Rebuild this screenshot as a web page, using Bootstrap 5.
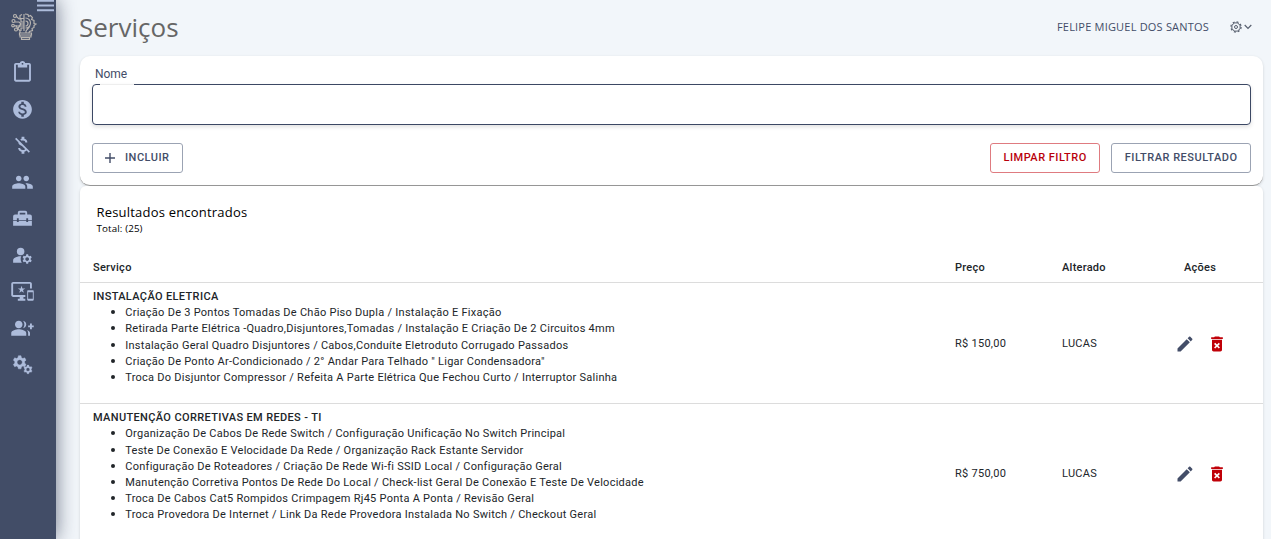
<!DOCTYPE html>
<html lang="pt-BR">
<head>
<meta charset="utf-8">
<title>Serviços</title>
<link rel="stylesheet" href="https://cdn.jsdelivr.net/npm/bootstrap@5.3.0/dist/css/bootstrap.min.css">
<style>
body{background:#f2f6fa;font-family:Roboto,"Liberation Sans",sans-serif;color:#212529;height:539px;overflow:hidden}
svg{display:block;fill:currentColor;flex:none}
.side{width:56px;height:539px;background:#424d67;color:#adbcdb;box-shadow:0 0 20px 0 rgba(50,60,85,.7);position:relative}
.burger{position:absolute;right:2px;top:0}
.brand-ico{color:#b9b5b1;margin:12px 0 20px 9px}
.side-nav{gap:14px;padding-left:11px}
.main{width:1215px;padding:0 8px 0 24px}
.top{height:56px}
.title{font:400 26px/32px "Open Sans",sans-serif;color:#666;margin:0 0 3px -1px}
.tools{color:#58606f;margin-top:-2px}
.user{font:400 11px/16px "Open Sans",sans-serif;letter-spacing:.2px;color:#434d68;margin-right:21px}
.gear,.chev{fill:none}
.chev{margin:0 11px 0 2px}
.panel{background:#fff;border-radius:10px;box-shadow:0 1px 3px rgba(0,0,0,.15)}
.filter{height:130px;padding:10px 12px 0;border-bottom:1px solid #999}
.filter label{font-size:12px;line-height:16px;letter-spacing:-.1px;color:#434d68;margin-left:3px;display:block}
.field{height:41px;border:1px solid #3c4864;border-radius:4px;box-shadow:0 2px 4px rgba(0,0,0,.12);margin-top:2px}
.notch{width:34px;height:1px;background:#eee;margin:-1px 0 0 7px}
.b{height:30px;border-radius:3px;border:1px solid #9ba3b3;color:#434d68;font-size:11px;font-weight:500;letter-spacing:.5px;padding:0 12.5px 2px;line-height:1;background:#fff}
.plus{margin:2px 9px 0 -1.5px}
.b-red{color:#b8000b;border-color:#df7b80}
.results{height:354px;border-radius:6px 6px 0 0;overflow:hidden}
.res-title{font:500 13px/18px "Open Sans",sans-serif;letter-spacing:.2px;color:#000;padding:17px 0 0 16.5px}
.res-total{font:500 9.8px/14px "Open Sans",sans-serif;letter-spacing:.12px;color:#000;padding:1px 0 0 16.5px}
.grid{font-size:11px;line-height:16.2px;letter-spacing:.265px;margin:15px 0 0;table-layout:fixed;width:1183px}
.grid th{font-weight:500;height:31px;padding:3px 13px 0;vertical-align:middle;border-bottom:1px solid #dcdcdc}
.grid td{padding:6.4px 13px 3px;vertical-align:middle;border-bottom:1px solid #dcdcdc}
.grid ul{list-style:none;margin:0 0 13.6px;padding-left:32.5px}
.grid li::before{content:"";display:inline-block;width:4px;height:4px;border-radius:50%;background:#212529;margin:0 10.235px 0 -14.5px;vertical-align:2px}
.grid strong{font-weight:500;display:block;letter-spacing:.36px}
.acts-head{margin-left:19px}
.acts{gap:12px;margin-left:10px}
</style>
</head>
<body>
<svg width="0" height="0" class="position-absolute"><defs>
<path id="cog" d="M20.75 16c0-.22-.03-.42-.06-.63l1.14-1.01-1-1.73-1.45.49c-.32-.27-.68-.48-1.08-.63L18 11h-2l-.3 1.49c-.4.15-.76.36-1.08.63l-1.45-.49-1 1.73 1.14 1.01c-.03.21-.06.41-.06.63s.03.42.06.63l-1.14 1.01 1 1.73 1.45-.49c.32.27.68.48 1.08.63L16 21h2l.3-1.49c.4-.15.76-.36 1.08-.63l1.45.49 1-1.73-1.14-1.01c.03-.21.06-.41.06-.63zM17 18c-1.1 0-2-.9-2-2s.9-2 2-2 2 .9 2 2-.9 2-2 2z"/>
<path id="edit" d="M3 17.25V21h3.75L17.81 9.94l-3.75-3.75L3 17.25zM20.71 7.04c.39-.39.39-1.02 0-1.41l-2.34-2.34c-.39-.39-1.02-.39-1.41 0l-1.83 1.83 3.75 3.75 1.83-1.83z"/>
<path id="del" d="M6 19c0 1.1.9 2 2 2h8c1.1 0 2-.9 2-2V7H6v12zm2.46-7.12l1.41-1.41L12 12.59l2.12-2.12 1.41 1.41L13.41 14l2.12 2.12-1.41 1.41L12 15.41l-2.12 2.12-1.41-1.41L10.59 14l-2.13-2.12zM15.5 4l-1-1h-5l-1 1H5v2h14V4z"/>
</defs></svg>
<div class="d-flex">
<aside class="side">
<svg class="burger" width="17" height="12"><path d="M0 0h17v1.800H0zM0 4.600h17v2H0zM0 9.200h17v2H0z"/></svg>
<svg class="brand-ico" width="28" height="29" viewBox="0 0 28 29"><g fill="none" stroke="currentColor" stroke-width="1.150">
<path d="M11 21v-2c-1-2-4-3-4-6M17 21v-2c1-2 4-3 4-6M10.500 21h12v2h-12zM11 23h11v2H11zM12.500 25.300h8v2h-8zM15 2v17M16.500 6a5 5 0 0 1 0 10M16.500 9a2.500 2.500 0 0 1 0 5M13 2.500l-2 1v3h4M7 4l3 3h2v3h3M6 10h4l2 2h3M5 14h5l2-2M8 17l3-3h4M12 19v-3h3M16 2l3 .5.5 2 2-1 2 2-1 2 2.500 1v3l2 .5-2 1.500v2l-2 1 .5 2-3 1-1 2"/>
<circle cx="6" cy="4" r="1.500"/><circle cx="4.500" cy="9" r="1.500"/><circle cx="4" cy="13.500" r="1.300"/><circle cx="7" cy="17.500" r="1.500"/></g></svg>
<nav class="d-flex flex-column side-nav">
<svg width="23" height="22.500" viewBox="0 0 24 24"><path d="M19 2h-4.180C14.400.84 13.300 0 12 0c-1.300 0-2.400.84-2.820 2H5c-1.100 0-2 .9-2 2v16c0 1.100.9 2 2 2h14c1.100 0 2-.9 2-2V4c0-1.100-.9-2-2-2zm-7 0c.55 0 1 .45 1 1s-.45 1-1 1-1-.45-1-1 .45-1 1-1zm7 18H5V4h2v3h10V4h2v16z"/></svg>
<svg width="23" height="22.500" viewBox="0 0 24 24"><path d="M12 2C6.480 2 2 6.480 2 12s4.480 10 10 10 10-4.480 10-10S17.520 2 12 2zm1.410 16.090V20h-2.670v-1.930c-1.710-.36-3.160-1.460-3.270-3.400h1.960c.1 1.050.82 1.870 2.650 1.870 1.960 0 2.400-.98 2.400-1.590 0-.83-.44-1.610-2.670-2.140-2.480-.6-4.180-1.620-4.180-3.670 0-1.720 1.390-2.840 3.110-3.210V4h2.670v1.950c1.860.45 2.790 1.860 2.850 3.390H14.300c-.05-1.110-.64-1.870-2.220-1.870-1.500 0-2.400.68-2.400 1.640 0 .84.65 1.390 2.670 1.910s4.180 1.390 4.180 3.910c-.01 1.830-1.380 2.830-3.120 3.160z"/></svg>
<svg width="23" height="22.500" viewBox="0 0 24 24"><path d="M12.500 6.900c1.780 0 2.440.85 2.500 2.100h2.210c-.07-1.720-1.120-3.300-3.210-3.810V3h-3v2.160c-.53.12-1.030.3-1.480.54l1.470 1.470c.41-.17.91-.27 1.510-.27zM5.330 4.060L4.060 5.330 7.500 8.770c0 2.080 1.560 3.210 3.910 3.910l3.510 3.510c-.34.48-1.050.91-2.420.91-2.060 0-2.870-.92-2.980-2.100h-2.200c.12 2.190 1.760 3.420 3.680 3.830V21h3v-2.150c.96-.18 1.820-.55 2.450-1.120l2.220 2.220 1.270-1.270L5.330 4.060z"/></svg>
<svg width="23" height="22.500" viewBox="0 0 24 24"><path d="M16 11c1.660 0 2.990-1.340 2.990-3S17.660 5 16 5c-1.660 0-3 1.340-3 3s1.340 3 3 3zm-8 0c1.660 0 2.990-1.340 2.990-3S9.660 5 8 5C6.340 5 5 6.340 5 8s1.340 3 3 3zm0 2c-2.330 0-7 1.170-7 3.500V19h14v-2.500c0-2.330-4.670-3.500-7-3.500zm8 0c-.29 0-.62.02-.97.05 1.160.84 1.970 1.970 1.970 3.450V19h6v-2.500c0-2.330-4.670-3.500-7-3.500z"/></svg>
<svg width="23" height="22.500" viewBox="0 0 24 24"><path d="M18 16h-2v-1H8v1H6v-1H2v5h20v-5h-4v1zM20 8h-3V6c0-1.100-.9-2-2-2H9c-1.100 0-2 .9-2 2v2H4c-1.100 0-2 .9-2 2v4h4v-2h2v2h8v-2h2v2h4v-4c0-1.100-.9-2-2-2zm-5 0H9V6h6v2z"/></svg>
<svg width="23" height="22.500" viewBox="0 0 24 24"><circle cx="10" cy="8" r="4"/><path d="M10.670 13.020C10.450 13.010 10.230 13 10 13c-2.420 0-4.680.67-6.610 1.820-.88.52-1.390 1.500-1.390 2.530V20h9.260c-.79-1.130-1.260-2.510-1.260-4 0-1.070.25-2.070.67-2.980z"/><use href="#cog"/></svg>
<svg width="23" height="22.500" viewBox="0 0 24 24"><path d="M23 11.010L18 11c-.55 0-1 .45-1 1v9c0 .55.45 1 1 1h5c.55 0 1-.45 1-1v-9c0-.55-.45-.99-1-.99zM23 20h-5v-7h5v7zM20 2H2C.89 2 0 2.890 0 4v12c0 1.100.89 2 2 2h7v2H7v2h8v-2h-2v-2h2v-2H2V4h18v5h2V4c0-1.110-.9-2-2-2zm-8.030 7L11 6l-.97 3H7l2.470 1.760-.94 2.910 2.470-1.800 2.470 1.800-.94-2.910L15 9h-3.030z"/></svg>
<svg width="23" height="22.500" viewBox="0 0 24 24"><path d="M22 9V7h-2v2h-2v2h2v2h2v-2h2V9zM8 12c2.210 0 4-1.790 4-4s-1.790-4-4-4-4 1.790-4 4 1.790 4 4 4zM8 13c-2.670 0-8 1.340-8 4v3h16v-3c0-2.660-5.330-4-8-4zM12.510 4.050C13.430 5.110 14 6.490 14 8s-.57 2.890-1.490 3.950C14.470 11.700 16 10.040 16 8s-1.530-3.700-3.490-3.950zM16.530 13.830C17.420 14.660 18 15.700 18 17v3h2v-3c0-1.450-1.590-2.510-3.470-3.170z"/></svg>
<svg width="23" height="22.500" viewBox="0 0 24 24"><use href="#cog" stroke="currentColor" stroke-width=".35" transform="translate(-14.800 -12.500) scale(1.400)"/><use href="#cog" stroke="currentColor" stroke-width=".35" transform="translate(2.200 2.800) scale(.92)"/></svg>
</nav>
</aside>
<main class="main">
<header class="top d-flex align-items-center justify-content-between">
<h1 class="title">Serviços</h1>
<div class="d-flex align-items-center tools"><span class="user">FELIPE MIGUEL DOS SANTOS</span>
<svg class="gear" width="12" height="12" viewBox="0 0 12 12" stroke="currentColor"><circle cx="6" cy="6" r="4.200"/><circle cx="6" cy="6" r="5.100" stroke-width="1.200" stroke-dasharray="2 2"/><circle cx="6" cy="6" r="1.500"/></svg>
<svg class="chev" width="8" height="6" stroke="currentColor" stroke-width="1.200"><path d="M.7 1l3.300 3.300L7.300 1"/></svg></div>
</header>
<section class="panel filter">
<label>Nome</label>
<div class="field"><div class="notch"></div></div>
<div class="d-flex mt-3" style="padding-top:2px">
<button class="b d-flex align-items-center"><svg class="plus" width="12" height="12" viewBox="0 0 12 12"><path d="M5.300 1h1.400v4.300H11v1.400H6.700V11H5.300V6.700H1V5.300h4.300z"/></svg>INCLUIR</button>
<button class="b b-red ms-auto">LIMPAR FILTRO</button>
<button class="b" style="margin-left:11px">FILTRAR RESULTADO</button>
</div>
</section>
<section class="panel results">
<div class="res-title">Resultados encontrados</div>
<div class="res-total">Total: (25)</div>
<table class="grid">
<colgroup><col style="width:862px"><col style="width:107px"><col style="width:103px"><col></colgroup>
<thead><tr><th>Serviço</th><th>Preço</th><th>Alterado</th><th><span class="acts-head">Ações</span></th></tr></thead>
<tbody>
<tr><td><strong>INSTALAÇÃO ELETRICA</strong><ul><li>Criação De 3 Pontos Tomadas De Chão Piso Dupla / Instalação E Fixação</li><li>Retirada Parte Elétrica -Quadro,Disjuntores,Tomadas / Instalação E Criação De 2 Circuitos 4mm</li><li>Instalação Geral Quadro Disjuntores / Cabos,Conduíte Eletroduto Corrugado Passados</li><li>Criação De Ponto Ar-Condicionado / 2° Andar Para Telhado " Ligar Condensadora"</li><li>Troca Do Disjuntor Compressor / Refeita A Parte Elétrica Que Fechou Curto / Interruptor Salinha</li></ul></td><td>R$ 150,00</td><td>LUCAS</td>
<td><div class="d-flex acts"><svg width="20" height="20" viewBox="0 0 24 24" color="#434d68"><use href="#edit"/></svg><svg width="20" height="20" viewBox="0 0 24 24" color="#c00008"><use href="#del"/></svg></div></td></tr>
<tr><td><strong>MANUTENÇÃO CORRETIVAS EM REDES - TI</strong><ul><li>Organização De Cabos De Rede Switch / Configuração Unificação No Switch Principal</li><li>Teste De Conexão E Velocidade Da Rede / Organização Rack Estante Servidor</li><li>Configuração De Roteadores / Criação De Rede Wi-fi SSID Local / Configuração Geral</li><li>Manutenção Corretiva Pontos De Rede Do Local / Check-list Geral De Conexão E Teste De Velocidade</li><li>Troca De Cabos Cat5 Rompidos Crimpagem Rj45 Ponta A Ponta / Revisão Geral</li><li>Troca Provedora De Internet / Link Da Rede Provedora Instalada No Switch / Checkout Geral</li></ul></td><td>R$ 750,00</td><td>LUCAS</td>
<td><div class="d-flex acts"><svg width="20" height="20" viewBox="0 0 24 24" color="#434d68"><use href="#edit"/></svg><svg width="20" height="20" viewBox="0 0 24 24" color="#c00008"><use href="#del"/></svg></div></td></tr>
</tbody></table>
</section>
</main>
</div>
<script src="https://cdn.jsdelivr.net/npm/bootstrap@5.3.0/dist/js/bootstrap.bundle.min.js"></script>
</body>
</html>
